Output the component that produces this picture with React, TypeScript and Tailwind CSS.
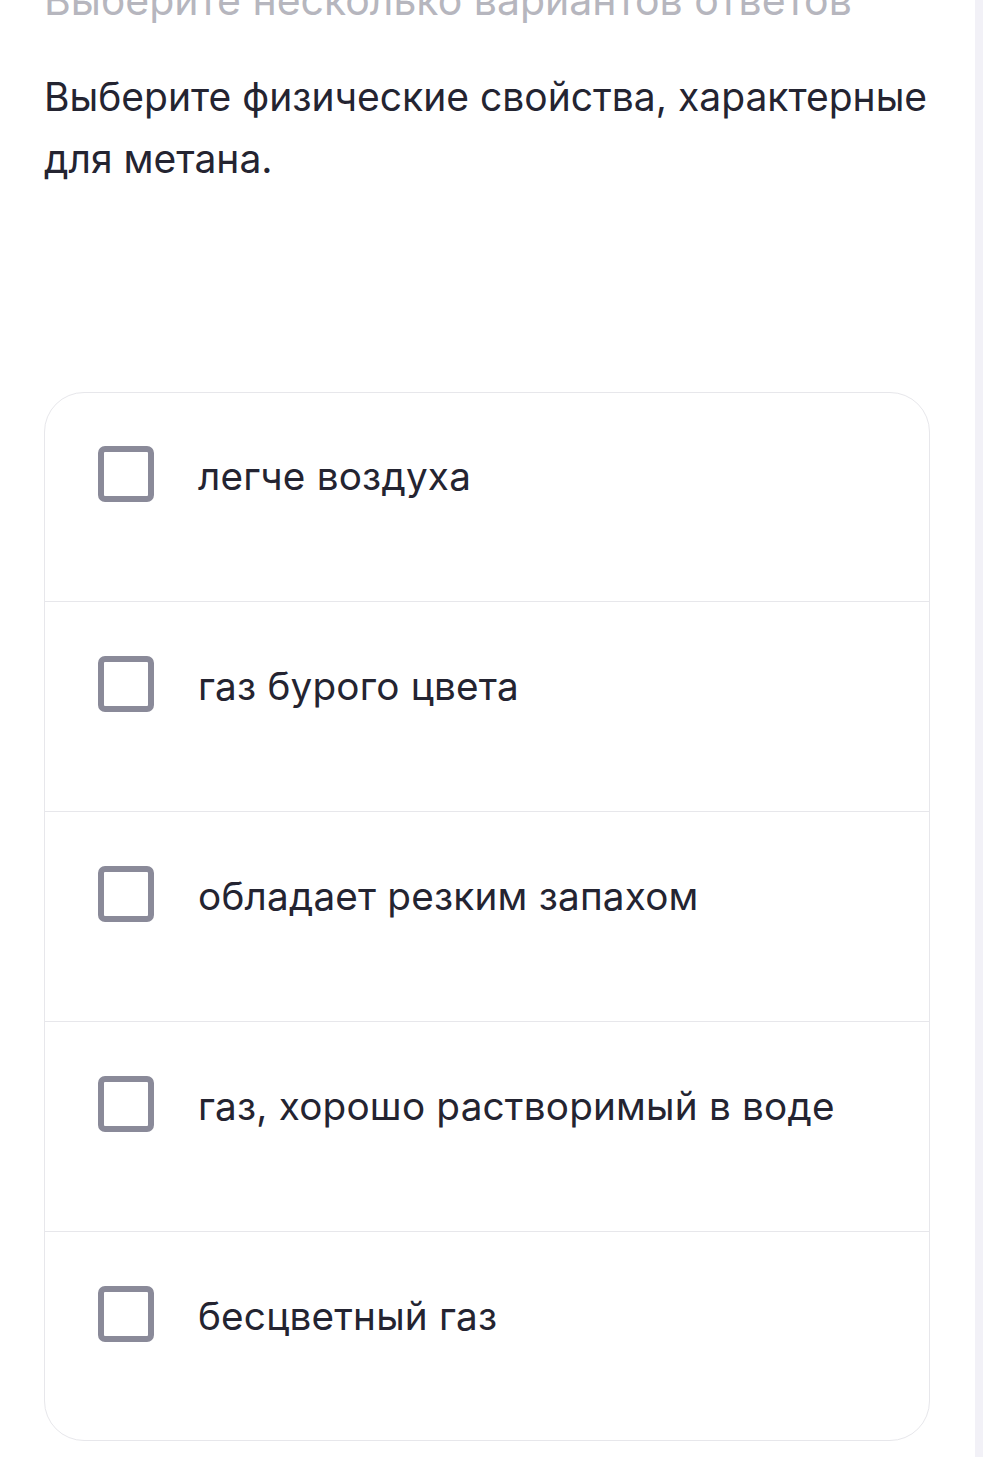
import React from "react";

const options = [
  "легче воздуха",
  "газ бурого цвета",
  "обладает резким запахом",
  "газ, хорошо растворимый в воде",
  "бесцветный газ",
];

function Checkbox() {
  return (
    <span className="block w-[56px] h-[56px] shrink-0 rounded-[7px] border-[6px] border-[#8a8a99] bg-white" />
  );
}

export default function App() {
  return (
    <div
      className="flex w-[983px] h-[1457px] overflow-hidden bg-white text-[#242431]"
      style={{ fontFamily: "Inter, 'Noto Sans', sans-serif" }}
    >
      <main className="w-[975px] px-[44px]">
        <p className="-mt-[22px] text-[41px] leading-[44px] text-[#b6b6be] whitespace-nowrap">
          Выберите несколько вариантов ответов
        </p>
        <h1 className="mt-[44px] text-[39px] leading-[62px] font-normal">
          Выберите физические свойства, характерные для метана.
        </h1>
        <ul className="mt-[202px] w-[886px] rounded-[40px] border border-[#e7e7eb] overflow-hidden">
          {options.map((text, i) => (
            <li
              key={text}
              className={
                "flex items-start gap-[44px] pl-[53px] " +
                (i === 0
                  ? "h-[208px] pt-[53px]"
                  : i === options.length - 1
                    ? "h-[209px] border-t border-[#e7e7eb] pt-[54px]"
                    : "h-[210px] border-t border-[#e7e7eb] pt-[54px]")
              }
            >
              <Checkbox />
              <span className="text-[38.7px] leading-[56px] mt-[2px] tracking-[0.2px]">{text}</span>
            </li>
          ))}
        </ul>
      </main>
      <aside className="w-[8px] h-full bg-[#f2f1f7]" />
    </div>
  );
}
